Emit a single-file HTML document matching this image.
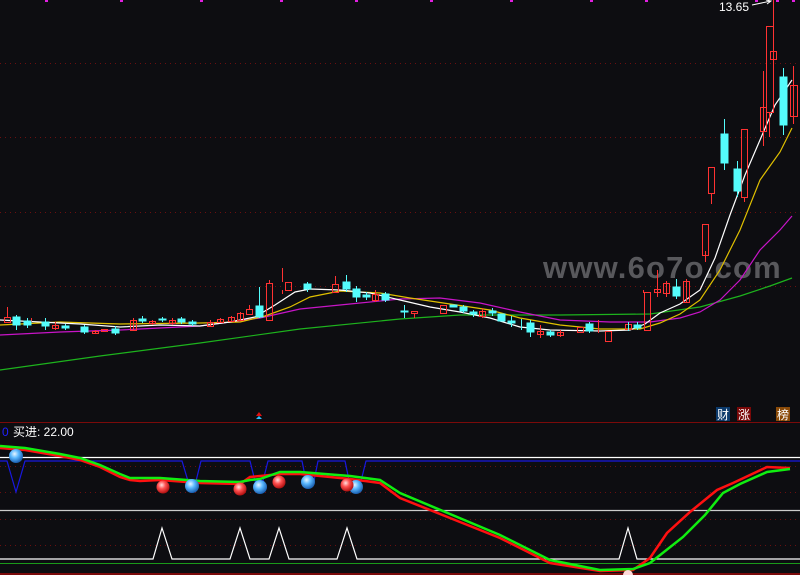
<!DOCTYPE html>
<html><head><meta charset="utf-8"><style>
html,body{margin:0;padding:0;background:#0d0d11;overflow:hidden}
svg{display:block}
text{font-family:"Liberation Sans","Noto Sans CJK SC",sans-serif}
</style></head><body>
<svg width="800" height="575" viewBox="0 0 800 575" xmlns="http://www.w3.org/2000/svg">
<rect width="800" height="575" fill="#0d0d11"/>
<defs>
<radialGradient id="bb" cx="40%" cy="35%" r="65%"><stop offset="0" stop-color="#e8f6ff"/><stop offset="0.45" stop-color="#5ab8ff"/><stop offset="1" stop-color="#1a5fb0"/></radialGradient>
<radialGradient id="rb" cx="40%" cy="35%" r="65%"><stop offset="0" stop-color="#ffe0e0"/><stop offset="0.45" stop-color="#ff5050"/><stop offset="1" stop-color="#b01010"/></radialGradient>
</defs>
<g stroke="#6a0f0f" stroke-dasharray="1,4" stroke-width="1">
<line x1="0" y1="63.5" x2="800" y2="63.5"/><line x1="0" y1="137.5" x2="800" y2="137.5"/>
<line x1="0" y1="212.5" x2="800" y2="212.5"/><line x1="0" y1="286.5" x2="800" y2="286.5"/>
<line x1="0" y1="466.5" x2="800" y2="466.5"/><line x1="0" y1="492.5" x2="800" y2="492.5"/>
<line x1="0" y1="519.5" x2="800" y2="519.5"/><line x1="0" y1="545.5" x2="800" y2="545.5"/>
</g>
<line x1="0" y1="422.5" x2="800" y2="422.5" stroke="#7a0a0a"/>
<line x1="0" y1="574" x2="800" y2="574" stroke="#7a0a0a" stroke-width="2"/>
<g fill="#e020e0"><rect x="45" y="0" width="3" height="2"/><rect x="120" y="0" width="3" height="2"/><rect x="200" y="0" width="3" height="2"/><rect x="280" y="0" width="3" height="2"/><rect x="355" y="0" width="3" height="2"/><rect x="430" y="0" width="3" height="2"/><rect x="510" y="0" width="3" height="2"/><rect x="590" y="0" width="3" height="2"/><rect x="645" y="0" width="3" height="2"/><rect x="755" y="0" width="3" height="2"/><rect x="776" y="0" width="3" height="2"/><rect x="792" y="0" width="3" height="2"/></g>
<text x="719" y="11" fill="#fff" font-size="12">13.65</text>
<path d="M752 5 L771 1 M766 0 L771 1 L767 4" stroke="#fff" fill="none"/>
<text x="543" y="278" fill="#58585c" font-size="31" font-weight="bold" letter-spacing="1.2">www.6o7o.com</text>
<polyline fill="none" stroke="#1db31d" stroke-width="1.2" points="0,370 100,356 200,343 300,329 400,319 460,315 560,315 650,314 700,307 740,296 770,286 792,278"/>
<polyline fill="none" stroke="#c814c8" stroke-width="1.2" points="0,335 60,332 120,330 200,326 260,318 300,309 350,304 400,299 440,298 480,303 520,312 560,320 610,322 650,322 680,318 700,312 720,300 740,280 760,250 780,230 792,216"/>
<polyline fill="none" stroke="#e0c000" stroke-width="1.2" points="0,325 60,322 120,324 200,323 240,322 265,316 290,307 310,297 340,291 380,293 410,298 450,304 490,310 520,318 560,325 600,329 640,329 660,323 680,314 700,300 720,270 740,230 760,180 780,152 792,128"/>
<polyline fill="none" stroke="#ffffff" stroke-width="1.2" points="0,320 40,322 80,324 120,327 160,325 200,326 230,322 255,317 275,305 295,292 310,289 340,290 370,293 400,300 430,307 460,312 490,318 520,327 550,330 600,331 630,330 645,324 660,313 680,304 700,290 715,258 730,215 745,175 760,140 775,105 792,80"/>
<g stroke="#ff3232" fill="none" shape-rendering="crispEdges">
<path d="M7.5 307V317M31.5 318V322M55.5 322V330M95.5 330V334M133.5 318V330M152.5 320V325M172.5 318V325M210.5 320V327M220.5 318V323M231.5 316V322M240.5 312V320M249.5 305V310M269.5 280V284M282.5 268V282M282.5 290V294M335.5 276V284M375.5 290V302M414.5 313V318M482.5 308V318M540.5 325V338M560.5 330V337M598.5 320V333M643.5 290V293M657.5 270V297M666.5 281V297M686.5 279V303M705.5 251V262M711.5 193V204M744.5 197V202M763.5 71V146M769.5 112V137M773.5 0V80M793.5 66V124"/>
<rect x="4.5" y="317.5" width="6" height="5"/><rect x="52.5" y="325.5" width="6" height="3"/><rect x="92.5" y="331.5" width="6" height="2"/><rect x="101.5" y="329.5" width="6" height="2"/><rect x="130.5" y="320.5" width="6" height="10"/><rect x="149.5" y="321.5" width="6" height="2"/><rect x="169.5" y="320.5" width="6" height="3"/><rect x="207.5" y="322.5" width="6" height="4"/><rect x="217.5" y="319.5" width="6" height="3"/><rect x="228.5" y="317.5" width="6" height="4"/><rect x="237.5" y="313.5" width="6" height="7"/><rect x="246.5" y="309.5" width="6" height="5"/><rect x="266.5" y="283.5" width="6" height="37"/><rect x="285.5" y="282.5" width="6" height="8"/><rect x="332.5" y="284.5" width="6" height="8"/><rect x="372.5" y="294.5" width="6" height="6"/><rect x="411.5" y="311.5" width="6" height="2"/><rect x="440.5" y="305.5" width="6" height="8"/><rect x="479.5" y="311.5" width="6" height="5"/><rect x="537.5" y="331.5" width="6" height="3"/><rect x="557.5" y="332.5" width="6" height="3"/><rect x="577.5" y="327.5" width="6" height="5"/><rect x="605.5" y="331.5" width="6" height="10"/><rect x="625.5" y="324.5" width="6" height="5"/><rect x="644.5" y="292.5" width="6" height="38"/><rect x="654.5" y="289.5" width="6" height="3"/><rect x="663.5" y="283.5" width="6" height="10"/><rect x="683.5" y="281.5" width="6" height="21"/><rect x="702.5" y="224.5" width="6" height="31"/><rect x="708.5" y="167.5" width="6" height="26"/><rect x="741.5" y="129.5" width="6" height="68"/><rect x="760.5" y="107.5" width="6" height="24"/><rect x="766.5" y="26.5" width="7" height="86"/><rect x="770.5" y="51.5" width="6" height="8"/><rect x="790.5" y="85.5" width="7" height="31"/>
</g>
<g fill="#54fcfc" stroke="#54fcfc" shape-rendering="crispEdges">
<path d="M16.5 315V330M27.5 318V328M45.5 318V330M65.5 324V330M84.5 325V334M115.5 326V335M142.5 316V323M162.5 317V322M181.5 317V324M192.5 320V326M259.5 287V318M307.5 282V292M346.5 275V292M356.5 286V302M366.5 292V300M385.5 292V302M404.5 305V318M463.5 305V313M473.5 310V317M492.5 308V316M511.5 316V327M521.5 319V330M530.5 320V337M550.5 330V337M589.5 322V333M628.5 322V331M637.5 322V330M676.5 279V299M724.5 119V170M737.5 161V197M783.5 68V135"/>
<rect x="13" y="317" width="7" height="8"/><rect x="24" y="321" width="7" height="4"/><rect x="42" y="322" width="7" height="4"/><rect x="62" y="326" width="7" height="2"/><rect x="81" y="327" width="7" height="5"/><rect x="112" y="329" width="7" height="4"/><rect x="139" y="319" width="7" height="2"/><rect x="159" y="319" width="7" height="1"/><rect x="178" y="319" width="7" height="3"/><rect x="189" y="322" width="7" height="2"/><rect x="256" y="306" width="7" height="11"/><rect x="304" y="284" width="7" height="5"/><rect x="343" y="282" width="7" height="7"/><rect x="353" y="289" width="7" height="8"/><rect x="363" y="295" width="7" height="2"/><rect x="382" y="294" width="7" height="6"/><rect x="401" y="311" width="7" height="1"/><rect x="450" y="305" width="7" height="2"/><rect x="460" y="307" width="7" height="4"/><rect x="470" y="312" width="7" height="2"/><rect x="489" y="311" width="7" height="2"/><rect x="498" y="314" width="7" height="7"/><rect x="508" y="321" width="7" height="2"/><rect x="527" y="323" width="7" height="9"/><rect x="547" y="332" width="7" height="3"/><rect x="586" y="324" width="7" height="7"/><rect x="634" y="325" width="7" height="3"/><rect x="673" y="287" width="7" height="9"/><rect x="721" y="134" width="7" height="29"/><rect x="734" y="169" width="7" height="22"/><rect x="780" y="77" width="7" height="48"/>
</g>
<path d="M256 416 L259 412 L262 416Z" fill="#e01010"/><path d="M256 419 L259 416 L262 419Z" fill="#30c0ff"/>
<rect x="716" y="407" width="14" height="14" fill="#0c3a6c"/><text x="717" y="419" fill="#fff" font-size="12">财</text>
<rect x="737" y="407" width="14" height="14" fill="#7a0808"/><text x="738" y="419" fill="#fff" font-size="12">涨</text>
<rect x="776" y="407" width="14" height="14" fill="#8a4a08"/><text x="777" y="419" fill="#fff" font-size="12">榜</text>
<text x="2" y="436" fill="#2020ff" font-size="12">0</text>
<text x="13" y="436" fill="#fff" font-size="12">买进: 22.00</text>
<line x1="0" y1="457.5" x2="800" y2="457.5" stroke="#fff" stroke-width="1.2"/>
<line x1="0" y1="510.5" x2="800" y2="510.5" stroke="#ccc" stroke-width="1.2"/>
<line x1="0" y1="563.5" x2="800" y2="563.5" stroke="#1a9a1a"/>
<polyline fill="none" stroke="#ffffff" stroke-width="1.2" points="0,559 153,559 162,528 172,559 230,559 240,528 250,559 269,559 279,528 289,559 337,559 347,528 357,559 619,559 628,528 637,559 800,559"/>
<polyline fill="none" stroke="#1818e0" stroke-width="1.2" points="0,461 7,461 16,492 25,461 182,461 188,481 196,481 201,461 250,461 255,481 263,481 268,461 302,461 306,481 314,481 318,461 345,461 350,485 360,485 366,461 800,461"/>
<polyline fill="none" stroke="#ff1010" stroke-width="2.5" points="0,448 25,450 60,456 80,460 100,467 120,477 130,480 140,481 160,480 200,483 240,484 250,477 260,476 280,474 300,474 350,479 380,483 400,498 450,518 500,538 550,563 600,571 633,570 650,558 667,533 690,512 717,490 733,483 767,467 790,468"/>
<polyline fill="none" stroke="#10ee10" stroke-width="2.5" points="0,446 25,448 60,454 80,458 100,465 120,474 130,478 140,478 160,478 200,481 240,482 250,480 260,479 280,472 300,472 350,476 380,480 400,493 450,514 500,535 550,560 600,570 633,569 650,563 683,537 705,515 723,493 740,484 767,472 790,469"/>
<g>
<circle cx="16" cy="456" r="7" fill="url(#bb)"/><circle cx="192" cy="486" r="7" fill="url(#bb)"/><circle cx="260" cy="487" r="7" fill="url(#bb)"/><circle cx="308" cy="482" r="7" fill="url(#bb)"/><circle cx="356" cy="487" r="7" fill="url(#bb)"/>
<circle cx="163" cy="487" r="6.5" fill="url(#rb)"/><circle cx="240" cy="489" r="6.5" fill="url(#rb)"/><circle cx="279" cy="482" r="6.5" fill="url(#rb)"/><circle cx="347" cy="485" r="6.5" fill="url(#rb)"/>
<circle cx="628" cy="575" r="5" fill="#ffd8d8"/>
</g>
</svg>
</body></html>
